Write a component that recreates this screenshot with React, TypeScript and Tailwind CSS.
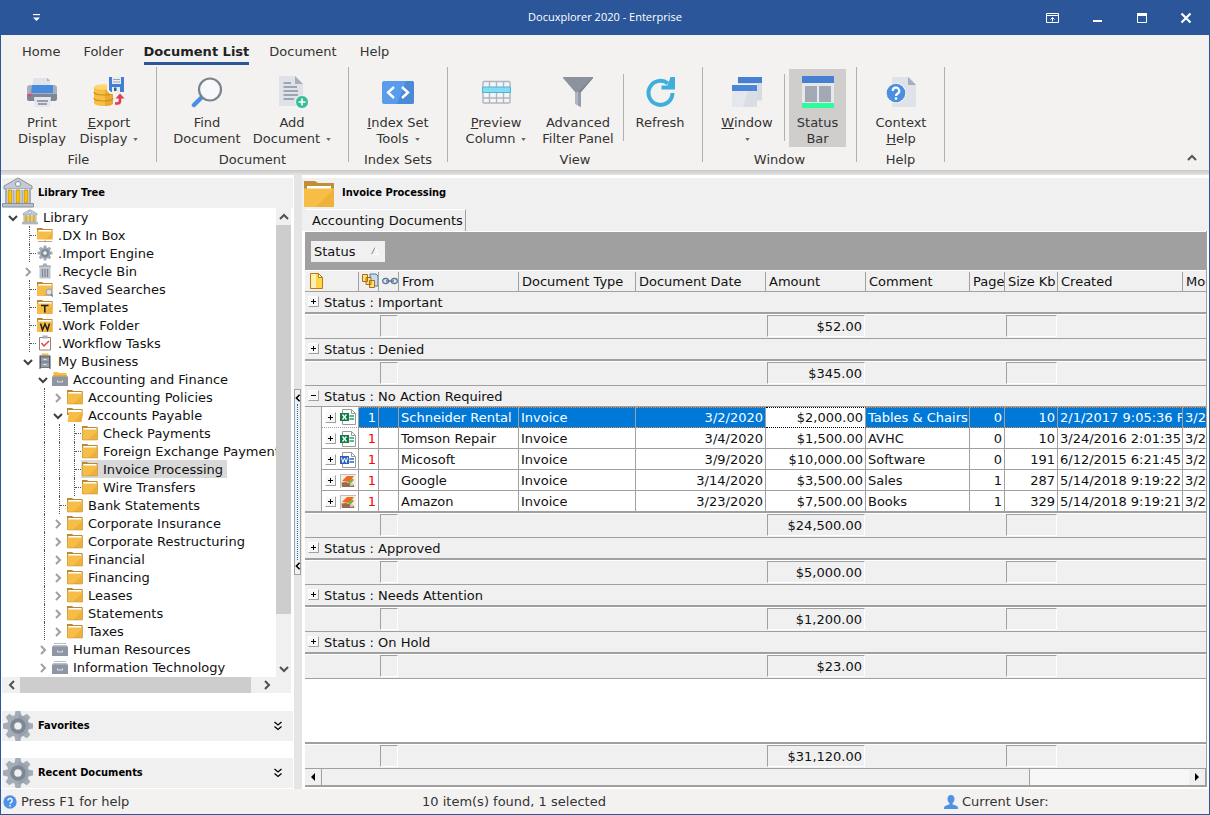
import { Fragment, type ReactNode } from 'react';
import clsx from 'clsx';

/* ---------- small icons ---------- */

function LibraryIcon({ className }: { className: string }) {
  return (
    <svg viewBox="0 0 32 32" className={className} aria-hidden="true">
      <path d="M16 1 30 9v3H2V9z" fill="#c3cad6" stroke="#8b93a1" />
      <circle cx="16" cy="7" r="2.6" fill="#f4f6fa" stroke="#8b93a1" />
      <path d="M4 12h24v14H4z" fill="#e9ebf0" />
      <path d="M6 13h4v13H6zM14 13h4v13h-4zM22 13h4v13h-4z" fill="#fdbf00" stroke="#8a7a4a" strokeWidth=".6" />
      <path d="M3 12h2v14H3zM11 13h1.600v13H11zM19.400 13H21v13h-1.600zM27 12h2v14h-2z" fill="#a5adba" />
      <path d="M.5 26.500h31v3.500H.5z" fill="#b9c0cd" stroke="#8b93a1" />
    </svg>
  );
}

function FolderIcon({ className, open = false, mark }: { className: string; open?: boolean; mark?: string }) {
  return (
    <svg viewBox="0 0 16 16" className={className} aria-hidden="true">
      <path d="M0 1h5l1.500 1H15.500v6H0z" fill="#b98a35" />
      <path d="M1.200 3h13.400v3H1.200z" fill="#fff" />
      <path d={open ? 'M.5 15 2 5h14l-1.500 10z' : 'M0 4.500h15.500V15H0z'} fill="#f6bd47" />
      <path d={open ? 'M7 15 16 5l-1.500 10z' : 'M6 15 15.500 6v9z'} fill="#edb03b" />
      {!mark && !open && <path d="M.5 4v11h15V3" fill="none" stroke="#c08f3a" strokeOpacity=".5" />}
      {mark === 'share' && (
        <>
          <path d="M0 12.500h16V16H0z" fill="#fff" />
          <path d="M1 14.500h14M8 12.500v3" stroke="#b8a888" />
        </>
      )}
      {mark === 'search' && (
        <>
          <circle cx="12" cy="11" r="3" fill="#d9e2ee" stroke="#8fa0b5" />
          <path d="m14 13.500 2 2" stroke="#3b82d6" strokeWidth="1.500" />
        </>
      )}
      {mark === 'T' && <path d="M4 6.500h7.500M7.800 6.500v7" stroke="#222" strokeWidth="1.600" />}
      {mark === 'W' && <path d="m3.500 6.500 2 6.500 2.500-6 2.500 6 2-6.500" fill="none" stroke="#222" strokeWidth="1.500" />}
    </svg>
  );
}

const teeth = [0, 45, 90, 135, 180, 225, 270, 315];

function GearIcon({ className }: { className: string }) {
  return (
    <svg viewBox="0 0 32 32" className={className} aria-hidden="true">
      {teeth.map((a) => (
        <path key={a} d="M13.500 1h5l1.500 7h-8z" fill="#a4acb8" transform={`rotate(${a} 16 16)`} />
      ))}
      <circle cx="16" cy="16" r="11" fill="#a4acb8" />
      <path d="M16 5a11 11 0 0 1 0 22z" fill="#99a1ae" />
      <circle cx="16" cy="16" r="6" fill="none" stroke="#7e8794" strokeWidth="3.500" />
      <circle cx="16" cy="16" r="3.600" fill="#eef0f3" />
    </svg>
  );
}

function TrashIcon() {
  return (
    <svg viewBox="0 0 16 16" className="size-4" aria-hidden="true">
      <path d="M2 2.700 6 2V.5h4V2l4 .7v1.800H2z" fill="#a8afba" />
      <path d="M2.500 4.500h11V15.500h-11z" fill="#bcc2cc" />
      <path d="M5.500 6v8M8 6v8M10.500 6v8" stroke="#7f8794" strokeWidth="1.200" />
    </svg>
  );
}

function TaskIcon() {
  return (
    <svg viewBox="0 0 16 16" className="size-4" aria-hidden="true">
      <path d="M2.500 2.500h11v12.500h-11z" fill="#fff" stroke="#9c7b70" />
      <path d="M5.500.5h5v3h-5z" fill="#a9b0bb" />
      <path d="m4.500 8 2.500 3 5-5" fill="none" stroke="#e0404f" strokeWidth="1.500" />
    </svg>
  );
}

function CabinetIcon() {
  return (
    <svg viewBox="0 0 16 16" className="size-4" aria-hidden="true">
      <path d="M4.500.5h7V4h-7z" fill="#edc05a" />
      <path d="M3 2.500h10V15H3z" fill="#6e7682" />
      <path d="M4 4.500h8v4H4zM4 9.500h8v4.500H4z" fill="#979fab" />
      <path d="M6.500 6.500h3M6.500 11.500h3" stroke="#e5e8ec" />
      <path d="M3 2.500V16M13 2.500V16" stroke="#444b55" />
    </svg>
  );
}

function DrawerIcon({ open = false }: { open?: boolean }) {
  return (
    <svg viewBox="0 0 16 16" className="size-4" aria-hidden="true">
      {open && <path d="M1.500 1H6l1 1h7.500v4h-13z" fill="#f3bc4d" />}
      {!open && <path d="M2 2.500h12" stroke="#b8bdc6" />}
      <path d="M1 4h14v2H1z" fill={open ? '#e3a93a' : '#b8bdc6'} />
      <path d="M0 5.500h16V15H0z" fill="#8e96a4" />
      <path d="M5.500 9.500v1.500h5V9.500" fill="none" stroke="#e9ecf0" strokeWidth=".9" />
    </svg>
  );
}

function Chevron({ dir, className = 'size-[10px]' }: { dir: 'up' | 'down' | 'left' | 'right'; className?: string }) {
  const d = {
    up: 'M1 7 5 3l4 4',
    down: 'M1 3l4 4 4-4',
    left: 'M7 1 3 5l4 4',
    right: 'M3 1l4 4-4 4',
  }[dir];
  return (
    <svg viewBox="0 0 10 10" className={className} fill="none" stroke="currentColor" strokeWidth="2" aria-hidden="true">
      <path d={d} />
    </svg>
  );
}

function HelpBubble({ className }: { className: string }) {
  return (
    <svg viewBox="0 0 20 20" className={className} aria-hidden="true">
      <circle cx="10" cy="10" r="9.500" fill="#4f93e6" />
      <path d="M7 8a3 3 0 1 1 4.600 2.500C10.400 11.200 10 11.600 10 12.600" fill="none" stroke="#fff" strokeWidth="2" />
      <circle cx="10" cy="15.200" r="1.200" fill="#fff" />
    </svg>
  );
}

function FileIcon({ kind }: { kind: string }) {
  if (kind === 'image') {
    return (
      <svg viewBox="0 0 16 16" className="size-4" aria-hidden="true">
        <path d="M.5 15V1.500H16" fill="none" stroke="#bdbdbd" />
        <path d="M1 2h15v12H1z" fill="#f6efe6" />
        <path d="M2 8 7 3h7L9 9z" fill="#f26522" />
        <path d="m8 9 4-4 2 2-4 4z" fill="#79b23c" />
        <path d="M1.500 9.500 6 9l8 3v2H2z" fill="#9a6a4f" />
        <path d="M10 10.500h3V13h-3z" fill="#d8b9c4" />
      </svg>
    );
  }
  const excel = kind === 'excel';
  return (
    <svg viewBox="0 0 16 16" className="size-4" aria-hidden="true">
      <path d="M2.500.5h9l4 4v11h-13z" fill="#fff" stroke="#9a9a9a" />
      <path d="M11.500.5v4h4" fill="none" stroke="#9a9a9a" />
      <path d="M0 4h9v8H0z" fill={excel ? '#107c41' : '#2b5fc0'} />
      {excel ? (
        <path d="m2.500 5.500 4 5m0-5-4 5" stroke="#fff" strokeWidth="1.300" />
      ) : (
        <path d="m1.500 5.500 1.300 5 1.700-4.500 1.700 4.500 1.300-5" fill="none" stroke="#fff" />
      )}
      <path d="M9.500 7h4.500M9.500 10h4.500" stroke={excel ? '#21a366' : '#2b5fc0'} strokeWidth="1.500" />
    </svg>
  );
}

/* ---------- ribbon icons (32px) ---------- */

function Icon32({ children }: { children: ReactNode }) {
  return (
    <svg viewBox="0 0 32 32" className="size-8" aria-hidden="true">
      {children}
    </svg>
  );
}

const icons = {
  print: (
    <Icon32>
      <path d="M8 2h14l2 2v6H7V3z" fill="#e0e4ea" />
      <path d="M21 2v3h3z" fill="#aab0bb" />
      <path d="M1 12q0-3 3-3h24q3 0 3 3v6H1z" fill="#aab0bb" />
      <path d="M1 18h30v5q0 2-2 2H3q-2 0-2-2z" fill="#7f8795" />
      <path d="M6 9h21v8H5z" fill="#4a8be0" />
      <circle cx="4" cy="19" r="1.600" fill="#e8465a" />
      <path d="M8 21h17l-1 10H9z" fill="#e3e6ec" />
      <path d="M11 25h11M12 28h9" stroke="#7f8795" strokeWidth="1.300" />
    </Icon32>
  ),
  exportDb: (
    <Icon32>
      <path d="M1 11v16c0 4 19 4 19 0V11z" fill="#f7bf45" />
      <path d="M12 13v17c5 0 8-1 8-3V11z" fill="#eaa92f" />
      <ellipse cx="10.500" cy="11" rx="9.500" ry="2.800" fill="#ffd670" />
      <path d="M1 16c0 4 19 4 19 0M1 22c0 4 19 4 19 0" fill="none" stroke="#c98f1f" strokeWidth="1.200" />
      <path d="M14 0h17v18H17l-3-3z" fill="#f3f2f1" />
      <path d="M16 1h15v15H18l-2-2z" fill="#3f80d4" />
      <path d="M19 1h9v7h-9zM19 11h8v5h-8z" fill="#e7ebf2" />
      <path d="M20 3.500h7M20 6h7" stroke="#9aa5b5" />
      <path d="M21 11.500h2.500V15H21z" fill="#3a5b8c" />
      <path d="M22 27.500h2.500q2.500 0 2.500-3V22" fill="none" stroke="#e33c50" strokeWidth="2.600" />
      <path d="m27 17.500 4.500 5h-9z" fill="#e33c50" />
    </Icon32>
  ),
  find: (
    <Icon32>
      <path d="m3 29 7-7" stroke="#4a8fe2" strokeWidth="4.500" strokeLinecap="round" />
      <circle cx="19" cy="13.500" r="11" fill="#f6f8fb" stroke="#7b838f" strokeWidth="2.200" />
    </Icon32>
  ),
  addDoc: (
    <Icon32>
      <path d="M3 0h16l8 8v22H3z" fill="#dfe2e8" />
      <path d="M19 0v8h8z" fill="#a8aeb9" />
      <path d="M7.500 7H15M7.500 11H21M7.500 15H22M7.500 19H22M7.500 23H18" stroke="#8a919d" strokeWidth="1.600" />
      <circle cx="26" cy="26" r="6.500" fill="#36bf96" stroke="#f3f2f1" />
      <path d="M26 22.500v7M22.500 26h7" stroke="#fff" strokeWidth="1.600" />
    </Icon32>
  ),
  indexSet: (
    <Icon32>
      <rect y="5" width="32" height="23" rx="2" fill="#5a9cec" />
      <path d="M24 5h6q2 0 2 2v19q0 2-2 2H15z" fill="#4c8ad8" />
      <path d="m12 11-6 5.500 6 5.500M20 11l6 5.500-6 5.500" fill="none" stroke="#fff" strokeWidth="2.400" />
    </Icon32>
  ),
  preview: (
    <Icon32>
      <rect x="3" y="5.500" width="27" height="21.500" rx="1" fill="#f4f5f7" stroke="#b0b5be" strokeWidth="1.400" />
      <path d="M9.500 5v22M16.500 5v22M23.500 5v22M3 22h27" stroke="#b0b5be" strokeWidth="1.400" />
      <path d="M2.500 11h28v5.500h-28z" fill="#86dcf3" stroke="#4cb5d6" />
    </Icon32>
  ),
  filter: (
    <Icon32>
      <path d="M1 1h30v1L19 16h-6L1 2z" fill="#8d939e" />
      <path d="M31 1 16 16h3L31 2z" fill="#7f858f" />
      <path d="M13 16h6v15l-6-3z" fill="#aeb6c2" />
      <path d="M16 16h3v15l-3-1.500z" fill="#949ca9" />
    </Icon32>
  ),
  refresh: (
    <Icon32>
      <path d="M28.500 17a12 12 0 1 1-4.500-9.500" fill="none" stroke="#3eaedc" strokeWidth="4" />
      <path d="M26.500 1h4.500v12.500H17.500v-4h6z" fill="#3eaedc" />
    </Icon32>
  ),
  windows: (
    <Icon32>
      <path d="M7 1.500h24v23H7z" fill="#d6dae1" />
      <path d="M7 1h24v6H7z" fill="#4580d2" />
      <path d="M0 8h26v24H0z" fill="#f3f2f1" />
      <path d="M1 9h25v22H1z" fill="#e4e7ed" />
      <path d="M19 9h7v22H12z" fill="#d9dde4" />
      <path d="M1 9h25v6H1z" fill="#4a86d8" />
    </Icon32>
  ),
  statusBar: (
    <Icon32>
      <path d="M0 0h32v27H0z" fill="#e6e8ec" />
      <path d="M0 0h32v7H0z" fill="#4580d2" />
      <path d="M3 10h12v16H3zM17 10h12v16H17z" fill="#a3a9b4" />
      <path d="M0 27h32v5H0z" fill="#2bfd9c" />
    </Icon32>
  ),
  contextHelp: (
    <Icon32>
      <path d="M7 1h17l7 7v23H7z" fill="#dfe2e8" />
      <path d="M23 1v8h8z" fill="#a8aeb9" />
      <circle cx="11" cy="17" r="10.300" fill="#f3f2f1" />
      <circle cx="11" cy="17" r="9.300" fill="#4b8fe2" />
      <path d="M7.800 15a3.200 3.200 0 1 1 4.900 2.500C11.400 18.300 11 18.700 11 20" fill="none" stroke="#fff" strokeWidth="2.200" />
      <circle cx="11" cy="22.600" r="1.300" fill="#fff" />
    </Icon32>
  ),
};

/* ---------- ribbon ---------- */

type RibbonButtonProps = {
  icon: ReactNode;
  line1: ReactNode;
  line2?: ReactNode;
  menu?: boolean;
  className: string;
};

function RibbonButton({ icon, line1, line2, menu, className }: RibbonButtonProps) {
  return (
    <button className={clsx('mt-[2px] flex h-[78px] shrink-0 flex-col items-center pt-[7px] leading-4', className)}>
      {icon}
      <span className="mt-[7px] whitespace-nowrap">{line1}</span>
      <span className="flex h-4 items-center whitespace-nowrap">
        {line2}
        {menu && (
          <svg viewBox="0 0 6 4" className={clsx('h-[3px] w-[5px]', line2 && 'ml-[6px]')} aria-hidden="true">
            <path d="M0 0h6L3 4z" fill="#666" />
          </svg>
        )}
      </span>
    </button>
  );
}

function RibbonGroup({ label, className, children }: { label: string; className: string; children: ReactNode }) {
  return (
    <section className="flex shrink-0 items-start">
      <div className={className}>
        <div className="flex">{children}</div>
        <div className="mt-[5px] text-center leading-4">{label}</div>
      </div>
      <div className="h-[95px] w-px bg-[#b0b0b0]" />
    </section>
  );
}

function ShortRule() {
  return <div className="mt-[7px] h-[67px] w-px bg-[#b0b0b0]" />;
}

function Ribbon() {
  const tabs = ['Home', 'Folder', 'Document List', 'Document', 'Help'];
  return (
    <header className="bg-[#f3f2f1] text-[#333]">
      <nav className="flex h-8 items-start gap-[17px] pl-[18px] pt-[7px]">
        {tabs.map((tab) => (
          <button
            key={tab}
            className={clsx(
              'whitespace-nowrap border-b-[3px] leading-5',
              tab === 'Document List'
                ? 'border-[#2b579a] font-bold text-[#222]'
                : 'border-transparent px-[3px]'
            )}
          >
            {tab}
          </button>
        ))}
      </nav>
      <div className="flex h-[103px]">
        <RibbonGroup label="File" className="w-[155px]">
          <RibbonButton className="ml-[11px] w-[60px]" icon={icons.print} line1="Print" line2="Display" />
          <RibbonButton className="w-[74px]" icon={icons.exportDb} line1={<><u>E</u>xport</>} line2="Display" menu />
        </RibbonGroup>
        <RibbonGroup label="Document" className="w-[191px]">
          <RibbonButton className="ml-[13px] w-[74px]" icon={icons.find} line1="Find" line2="Document" />
          <RibbonButton className="w-[96px]" icon={icons.addDoc} line1="Add" line2="Document" menu />
        </RibbonGroup>
        <RibbonGroup label="Index Sets" className="w-[98px]">
          <RibbonButton className="ml-[9px] w-[80px]" icon={icons.indexSet} line1={<><u>I</u>ndex Set</>} line2="Tools" menu />
        </RibbonGroup>
        <RibbonGroup label="View" className="w-[254px]">
          <RibbonButton className="ml-[11px] w-[74px]" icon={icons.preview} line1={<><u>P</u>review</>} line2="Column" menu />
          <RibbonButton className="w-[90px]" icon={icons.filter} line1="Advanced" line2="Filter Panel" />
          <ShortRule />
          <RibbonButton className="w-[72px]" icon={icons.refresh} line1="Refresh" />
        </RibbonGroup>
        <RibbonGroup label="Window" className="w-[153px]">
          <RibbonButton className="ml-[7px] w-[74px]" icon={icons.windows} line1={<><u>W</u>indow</>} menu />
          <ShortRule />
          <RibbonButton className="ml-1 w-[57px] bg-[#cfcecd]" icon={icons.statusBar} line1="Status" line2="Bar" />
        </RibbonGroup>
        <RibbonGroup label="Help" className="w-[87px]">
          <RibbonButton className="ml-3 w-[64px]" icon={icons.contextHelp} line1="Context" line2={<span><u>H</u>elp</span>} />
        </RibbonGroup>
        <button aria-label="Collapse ribbon" className="mb-[7px] ml-auto mr-3 self-end text-[#555]">
          <Chevron dir="up" />
        </button>
      </div>
    </header>
  );
}

function TitleBar() {
  return (
    <div className="grid h-[35px] shrink-0 grid-cols-[1fr_auto_1fr] items-center bg-[#2b579a] text-white">
      <button aria-label="Customize quick access toolbar" className="ml-8 w-[8px]">
        <svg viewBox="0 0 6 6" className="size-[7px]" aria-hidden="true">
          <path d="M0 .5h6" stroke="#fff" />
          <path d="M0 3h6L3 6z" fill="#fff" />
        </svg>
      </button>
      <h1 className="font-['Open_Sans','Noto_Sans',sans-serif] text-[11px]">Docuxplorer 2020 - Enterprise</h1>
      <div className="flex items-center justify-end gap-8 pr-[17px]">
        <button aria-label="Ribbon display options">
          <svg viewBox="0 0 14 12" className="h-3 w-[14px]" fill="none" stroke="#fff" aria-hidden="true">
            <path d="M.5 1.500h12v9H.5zM.5 3.500h12M6.500 9.500v-4M4.500 7.500l2-2 2 2" />
          </svg>
        </button>
        <button aria-label="Minimize">
          <svg viewBox="0 0 12 12" className="size-3" aria-hidden="true">
            <path d="M1 8h9v2H1z" fill="#fff" />
          </svg>
        </button>
        <button aria-label="Maximize">
          <svg viewBox="0 0 12 12" className="size-3" aria-hidden="true">
            <path d="M1 1h10v3H1z" fill="#fff" />
            <path d="M1.500 1.500h9v9h-9z" fill="none" stroke="#fff" />
          </svg>
        </button>
        <button aria-label="Close">
          <svg viewBox="0 0 12 12" className="size-3" stroke="#fff" strokeWidth="2.200" aria-hidden="true">
            <path d="m1.500 1.500 9 9m0-9-9 9" />
          </svg>
        </button>
      </div>
    </div>
  );
}

/* ---------- library tree ---------- */

type Node = {
  label: string;
  depth: number;
  icon: ReactNode;
  state?: 'open' | 'closed';
  selected?: boolean;
};

const folder = <FolderIcon className="size-4" />;

const nodes: Node[] = [
  { label: 'Library', depth: 0, icon: <LibraryIcon className="size-4" />, state: 'open' },
  { label: '.DX In Box', depth: 1, icon: <FolderIcon className="size-4" mark="share" /> },
  { label: '.Import Engine', depth: 1, icon: <GearIcon className="size-4" /> },
  { label: '.Recycle Bin', depth: 1, icon: <TrashIcon />, state: 'closed' },
  { label: '.Saved Searches', depth: 1, icon: <FolderIcon className="size-4" mark="search" /> },
  { label: '.Templates', depth: 1, icon: <FolderIcon className="size-4" mark="T" /> },
  { label: '.Work Folder', depth: 1, icon: <FolderIcon className="size-4" mark="W" /> },
  { label: '.Workflow Tasks', depth: 1, icon: <TaskIcon /> },
  { label: 'My Business', depth: 1, icon: <CabinetIcon />, state: 'open' },
  { label: 'Accounting and Finance', depth: 2, icon: <DrawerIcon open />, state: 'open' },
  { label: 'Accounting Policies', depth: 3, icon: folder, state: 'closed' },
  { label: 'Accounts Payable', depth: 3, icon: <FolderIcon className="size-4" open />, state: 'open' },
  { label: 'Check Payments', depth: 4, icon: folder },
  { label: 'Foreign Exchange Payments', depth: 4, icon: folder },
  { label: 'Invoice Processing', depth: 4, icon: folder, selected: true },
  { label: 'Wire Transfers', depth: 4, icon: folder },
  { label: 'Bank Statements', depth: 3, icon: folder },
  { label: 'Corporate Insurance', depth: 3, icon: folder, state: 'closed' },
  { label: 'Corporate Restructuring', depth: 3, icon: folder, state: 'closed' },
  { label: 'Financial', depth: 3, icon: folder, state: 'closed' },
  { label: 'Financing', depth: 3, icon: folder, state: 'closed' },
  { label: 'Leases', depth: 3, icon: folder, state: 'closed' },
  { label: 'Statements', depth: 3, icon: folder, state: 'closed' },
  { label: 'Taxes', depth: 3, icon: folder, state: 'closed' },
  { label: 'Human Resources', depth: 2, icon: <DrawerIcon />, state: 'closed' },
  { label: 'Information Technology', depth: 2, icon: <DrawerIcon />, state: 'closed' },
];

function TreeRow({ node }: { node: Node }) {
  return (
    <li className="flex h-[18px] pl-[3px]">
      {Array.from({ length: node.depth }, (_, d) => (
        <span key={d} className="w-[15px] shrink-0 pl-[9px]">
          {d >= 2 && <span className="block h-full border-l border-dotted border-[#555]" />}
        </span>
      ))}
      {node.state ? (
        <button
          aria-label={node.state === 'open' ? 'Collapse' : 'Expand'}
          className={clsx(
            'flex w-4 shrink-0 items-center justify-center pt-px',
            node.state === 'open' ? 'text-[#404040]' : 'text-[#a0a0a0]'
          )}
        >
          <Chevron dir={node.state === 'open' ? 'down' : 'right'} />
        </button>
      ) : (
        <span className="flex w-4 shrink-0 items-center pl-[9px]">
          <span className="h-full border-l border-dotted border-[#555]" />
          <span className="w-full border-t border-dotted border-[#555]" />
        </span>
      )}
      <button
        className={clsx(
          'flex items-center gap-1 whitespace-nowrap pl-px pr-1',
          node.selected && 'bg-[#d9d9d9]'
        )}
      >
        {node.icon}
        <span className="pl-px pt-[2px] leading-4">{node.label}</span>
      </button>
    </li>
  );
}

const paneHeading = "font-['DejaVu_Sans_Condensed','DejaVu_Sans',sans-serif] text-[11px] font-bold text-black";

function PaneTitle({ icon, children, collapsed }: { icon: ReactNode; children: ReactNode; collapsed?: boolean }) {
  return (
    <div className="flex h-[30px] shrink-0 items-center bg-[#f0f0f0] pr-[10px]">
      {icon}
      <h2 className={clsx(paneHeading, 'ml-1 grow')}>{children}</h2>
      {collapsed && (
        <button aria-label="Expand pane">
          <svg viewBox="0 0 10 10" className="size-[10px]" fill="none" stroke="#000" strokeWidth="1.300" aria-hidden="true">
            <path d="m1.500 1 3.500 3L8.500 1M1.500 5.500l3.500 3 3.500-3" />
          </svg>
        </button>
      )}
    </div>
  );
}

function Sidebar() {
  return (
    <aside className="flex w-[293px] shrink-0 flex-col border-r border-white bg-white pl-px pt-[3px]">
      <PaneTitle icon={<LibraryIcon className="size-8" />}>Library Tree</PaneTitle>
      <div className="mr-[2px] flex min-h-0 grow">
        <ul className="min-w-0 grow overflow-hidden">
          {nodes.map((node) => (
            <TreeRow key={node.label} node={node} />
          ))}
        </ul>
        <div className="flex w-[15px] shrink-0 flex-col bg-[#f0f0f0] text-[#505050]">
          <button aria-label="Scroll up" className="flex h-[17px] shrink-0 items-center justify-center">
            <Chevron dir="up" />
          </button>
          <div className="min-h-0 grow basis-[388px] bg-[#cdcdcd]" />
          <div className="min-h-0 grow basis-[46px]" />
          <button aria-label="Scroll down" className="flex h-[17px] shrink-0 items-center justify-center">
            <Chevron dir="down" />
          </button>
        </div>
      </div>
      <div className="mr-[2px] flex h-4 shrink-0 bg-[#f0f0f0] pl-px pr-[16px] text-[#505050]">
        <button aria-label="Scroll left" className="flex w-[17px] items-center justify-center">
          <Chevron dir="left" />
        </button>
        <div className="grow bg-[#cdcdcd]" />
        <button aria-label="Scroll right" className="ml-[7px] flex w-[17px] items-center justify-center">
          <Chevron dir="right" />
        </button>
      </div>
      <div className="mt-[18px]">
        <PaneTitle collapsed icon={<GearIcon className="size-8" />}>Favorites</PaneTitle>
      </div>
      <div className="mb-px mt-[17px]">
        <PaneTitle collapsed icon={<GearIcon className="size-8" />}>Recent Documents</PaneTitle>
      </div>
    </aside>
  );
}

function Splitter() {
  return (
    <div className="flex w-2 shrink-0 items-center bg-[#e5e5e5]">
      <button
        aria-label="Collapse sidebar"
        className="flex h-[186px] w-[7px] flex-col items-center border border-[#a0a0a0] bg-[#f0f0f0] py-1 text-black"
      >
        <Chevron dir="left" className="size-2" />
        <span className="my-[2px] grow border-l border-dotted border-[#0078d7]" />
        <Chevron dir="left" className="size-2" />
      </button>
    </div>
  );
}

/* ---------- document grid ---------- */

type Doc = {
  kind: string;
  from: string;
  date: string;
  amount: string;
  comment: string;
  pages: number;
  size: number;
  created: string;
};

const docs: Doc[] = [
  { kind: 'excel', from: 'Schneider Rental', date: '3/2/2020', amount: '$2,000.00', comment: 'Tables & Chairs', pages: 0, size: 10, created: '2/1/2017 9:05:36 PM' },
  { kind: 'excel', from: 'Tomson Repair', date: '3/4/2020', amount: '$1,500.00', comment: 'AVHC', pages: 0, size: 10, created: '3/24/2016 2:01:35' },
  { kind: 'word', from: 'Micosoft', date: '3/9/2020', amount: '$10,000.00', comment: 'Software', pages: 0, size: 191, created: '6/12/2015 6:21:45' },
  { kind: 'image', from: 'Google', date: '3/14/2020', amount: '$3,500.00', comment: 'Sales', pages: 1, size: 287, created: '5/14/2018 9:19:22' },
  { kind: 'image', from: 'Amazon', date: '3/23/2020', amount: '$7,500.00', comment: 'Books', pages: 1, size: 329, created: '5/14/2018 9:19:21' },
];

const groups: { status: string; total: string; rows?: Doc[] }[] = [
  { status: 'Important', total: '$52.00' },
  { status: 'Denied', total: '$345.00' },
  { status: 'No Action Required', total: '$24,500.00', rows: docs },
  { status: 'Approved', total: '$5,000.00' },
  { status: 'Needs Attention', total: '$1,200.00' },
  { status: 'On Hold', total: '$23.00' },
];

function Columns() {
  return (
    <colgroup>
      <col className="w-[17px]" />
      <col className="w-[37px]" />
      <col className="w-[20px]" />
      <col className="w-[20px]" />
      <col className="w-[120px]" />
      <col className="w-[117px]" />
      <col className="w-[130px]" />
      <col className="w-[100px]" />
      <col className="w-[104px]" />
      <col className="w-[35px]" />
      <col className="w-[53px]" />
      <col className="w-[125px]" />
      <col />
    </colgroup>
  );
}

function Th({ children, span, last = false }: { children: ReactNode; span?: number; last?: boolean }) {
  return (
    <th colSpan={span} className="h-[22px] border-b border-t border-b-[#a0a0a0] border-t-white bg-[#f0f0f0] p-0 text-left font-normal">
      <div
        className={clsx(
          'flex h-[19px] items-center overflow-hidden whitespace-nowrap pl-[3px] leading-[19px]',
          !last && 'border-r border-[#a0a0a0]'
        )}
      >
        {children}
      </div>
    </th>
  );
}

function Toggle({ open = false, className }: { open?: boolean; className?: string }) {
  return (
    <button
      aria-label={open ? 'Collapse' : 'Expand'}
      className={clsx(
        'size-[11px] shrink-0 border border-b-[#a0a0a0] border-l-white border-r-[#a0a0a0] border-t-white bg-[#f7f7f7]',
        className
      )}
    >
      <svg viewBox="0 0 9 9" className="block size-[9px]" stroke="#000" aria-hidden="true">
        <path d={open ? 'M2 4.500h5' : 'M2 4.500h5M4.500 2v5'} />
      </svg>
    </button>
  );
}

const sumBox = 'mx-px h-[22px] border border-b-white border-l-[#a0a0a0] border-r-white border-t-[#a0a0a0]';

function SummaryRow({ total }: { total: string }) {
  const cell = 'h-[25px] border-b border-t border-b-[#a0a0a0] border-t-white bg-[#f0f0f0] p-0 align-top';
  return (
    <tr>
      <td colSpan={3} className={cell} />
      <td className={cell}>
        <div className={sumBox} />
      </td>
      <td colSpan={3} className={cell} />
      <td className={cell}>
        <div className={clsx(sumBox, 'pr-[2px] text-right leading-[21px]')}>{total}</div>
      </td>
      <td colSpan={2} className={cell} />
      <td className={cell}>
        <div className={sumBox} />
      </td>
      <td colSpan={2} className={cell} />
    </tr>
  );
}

function DocRow({ doc, selected, last }: { doc: Doc; selected: boolean; last: boolean }) {
  const base = clsx(
    'overflow-hidden whitespace-nowrap border-b border-r border-r-[#a0a0a0] px-[2px] pb-0',
    last ? 'h-[22px] border-b-2' : 'h-[21px]',
    selected
      ? 'border-t pt-0 leading-[19px] [border-bottom-style:dotted] [border-top-style:dotted]'
      : 'border-b-[#a0a0a0] pt-[2px] leading-[18px]'
  );
  const cell = clsx(base, selected ? 'border-b-[#ff8a2b] border-t-[#ff8a2b] bg-[#0078d7] text-white' : 'bg-white');
  return (
    <tr>
      <td className={clsx('border-r border-[#a0a0a0] bg-[#f0f0f0] p-0', last && 'border-b-2')} />
      <td className={clsx(base, 'bg-white', selected && 'border-b-[#a0a0a0] border-t-white')}>
        <div className="-mt-px flex items-center gap-1 pl-px">
          <Toggle />
          <FileIcon kind={doc.kind} />
        </div>
      </td>
      <td className={clsx(cell, 'text-right', !selected && 'text-[#f00]')}>1</td>
      <td className={cell} />
      <td className={cell}>{doc.from}</td>
      <td className={cell}>Invoice</td>
      <td className={clsx(cell, 'text-right')}>{doc.date}</td>
      <td className={clsx(base, 'bg-white text-right', selected && 'border-b-black border-t-black')}>{doc.amount}</td>
      <td className={cell}>{doc.comment}</td>
      <td className={clsx(cell, 'text-right')}>{doc.pages}</td>
      <td className={clsx(cell, 'text-right')}>{doc.size}</td>
      <td className={cell}>{doc.created}</td>
      <td className={clsx(cell, 'border-r-0')}>3/2/2020</td>
    </tr>
  );
}

const tableClass = 'w-full table-fixed border-separate border-spacing-0';

function DocumentGrid() {
  return (
    <div className="ml-[3px] mr-[2px] flex min-h-0 grow flex-col overflow-hidden border-b-2 border-r border-[#a0a0a0]">
      <div className="flex h-[39px] shrink-0 items-center border-t border-white bg-[#a0a0a0] pl-[6px]">
        <button className="flex h-[21px] w-[74px] items-center justify-between bg-[#f0f0f0] pl-[3px] pr-[6px]">
          <span className="pt-px">Status</span>
          <svg viewBox="0 0 8 8" className="size-2" fill="none" aria-hidden="true">
            <path d="M.5 7.500 4 .5" stroke="#888" />
            <path d="m4 .5 3.500 7h-7" stroke="#fff" />
          </svg>
        </button>
      </div>
      <table className={tableClass}>
        <Columns />
        <thead>
          <tr>
            <Th span={2}>
              <svg viewBox="0 0 16 16" className="size-4" role="img" aria-label="File type">
                <path d="M2.500.5h8l4 4v11h-12z" fill="#ffd54a" stroke="#b87a12" />
                <path d="M3 1h5v14H3z" fill="#fff0b0" />
                <path d="M10.500.5v4h4z" fill="#fff" stroke="#b87a12" />
              </svg>
            </Th>
            <Th>
              <svg viewBox="0 0 16 16" className="size-4 shrink-0" role="img" aria-label="Versions">
                <path d="M8 1h6l2 2v10H8z" fill="#c9d9ee" stroke="#56749c" />
                <path d="M.5 1.500h5v7h-5zM4 4.500h5v7H4zM7.500 7.500h5v7h-5z" fill="#ffdf80" stroke="#a86f10" />
              </svg>
            </Th>
            <Th>
              <svg viewBox="0 0 16 16" className="size-4 shrink-0" role="img" aria-label="Links">
                <rect x=".7" y="5.500" width="6" height="5" rx="2.400" fill="#dfe7f2" stroke="#5f7699" strokeWidth="1.300" />
                <rect x="9.300" y="5.500" width="6" height="5" rx="2.400" fill="#dfe7f2" stroke="#5f7699" strokeWidth="1.300" />
                <path d="M4 8h8" stroke="#5f7699" strokeWidth="1.500" />
              </svg>
            </Th>
            <Th>From</Th>
            <Th>Document Type</Th>
            <Th>Document Date</Th>
            <Th>Amount</Th>
            <Th>Comment</Th>
            <Th>Pages</Th>
            <Th>Size Kb</Th>
            <Th>Created</Th>
            <Th last>Modified</Th>
          </tr>
        </thead>
        <tbody>
          {groups.map((group) => (
            <Fragment key={group.status}>
              <tr>
                <td
                  colSpan={13}
                  className={clsx(
                    'border-[#a0a0a0] bg-[#f0f0f0] py-0 pl-[3px] pr-0 align-top',
                    group.rows ? 'h-[21px] border-b' : 'h-[22px] border-b-2'
                  )}
                >
                  <div className="flex items-start gap-[5px]">
                    <Toggle open={!!group.rows} className="mt-1" />
                    <span className="pt-[2px] leading-[18px]">Status : {group.status}</span>
                  </div>
                </td>
              </tr>
              {group.rows?.map((doc, i) => (
                <DocRow key={doc.from} doc={doc} selected={i === 0} last={i === docs.length - 1} />
              ))}
              <SummaryRow total={group.total} />
            </Fragment>
          ))}
        </tbody>
      </table>
      <div className="grow bg-white" />
      <table className={clsx(tableClass, 'border-t-2 border-[#a0a0a0]')}>
        <Columns />
        <tbody>
          <SummaryRow total="$31,120.00" />
        </tbody>
      </table>
      <div className="flex h-4 shrink-0 bg-[#f7f7f7]">
        <button aria-label="Scroll left" className="flex w-[17px] items-center justify-center border-r border-[#a0a0a0] bg-[#f0f0f0]">
          <svg viewBox="0 0 4 8" className="h-2 w-1" aria-hidden="true">
            <path d="M4 0v8L0 4z" />
          </svg>
        </button>
        <div className="grow basis-[708px] border-r border-[#a0a0a0] bg-[#f0f0f0]" />
        <div className="grow basis-[159px]" />
        <button aria-label="Scroll right" className="flex w-[17px] items-center justify-center border-r border-[#a0a0a0] bg-[#f0f0f0]">
          <svg viewBox="0 0 4 8" className="h-2 w-1" aria-hidden="true">
            <path d="M0 0v8l4-4z" />
          </svg>
        </button>
      </div>
    </div>
  );
}

function DocumentPane() {
  return (
    <main className="flex min-w-0 grow flex-col bg-white pb-[2px] pt-[3px]">
      <div className="bg-[#f0f0f0]">
        <div className="flex h-[31px] items-center gap-2 pl-[2px]">
          <svg viewBox="0 0 30 28" className="h-7 w-[30px]" aria-hidden="true">
            <path d="M0 1h11l3 2h16v9H0z" fill="#c08f3a" />
            <path d="M3 6h24v4H3z" fill="#fff" />
            <path d="M0 8.500h30V27H0z" fill="#f6bd47" />
            <path d="M12 27 30 9v18z" fill="#efb13a" />
          </svg>
          <h2 className={paneHeading}>Invoice Processing</h2>
        </div>
        <button className="ml-1 block h-[22px] whitespace-nowrap border-r border-t border-r-[#a0a0a0] border-t-white pl-[6px] pr-[2px] leading-[20px]">
          Accounting Documents
        </button>
      </div>
      <DocumentGrid />
    </main>
  );
}

function StatusBar() {
  return (
    <footer className="grid h-[25px] shrink-0 grid-cols-[421px_1fr_265px] items-center bg-[#f3f2f1] text-[#333]">
      <span className="flex items-center gap-1 pl-[2px]">
        <HelpBubble className="size-[14px]" />
        Press F1 for help
      </span>
      <span>10 item(s) found, 1 selected</span>
      <span className="flex items-center gap-1">
        <svg viewBox="0 0 14 14" className="size-[14px]" aria-hidden="true">
          <path d="M7 0c2.500 0 3.500 2 3.500 4S9.500 7.500 8.500 8.300v.9L13 11q1 .6 1 3H0q0-2.400 1-3l4.500-1.800v-.9C4.500 7.500 3.500 6 3.500 4S4.500 0 7 0z" fill="#4f93e6" />
        </svg>
        Current User:
      </span>
    </footer>
  );
}

export default function App() {
  return (
    <div className="flex h-screen flex-col overflow-hidden border border-t-0 border-[#2b579a] bg-[#f3f2f1] font-['Verdana','DejaVu_Sans',sans-serif] text-[13px] text-[#111]">
      <TitleBar />
      <Ribbon />
      <div className="h-[5px] shrink-0 bg-linear-to-b from-[#c8c8c8] to-[#e5e5e5]" />
      <div className="flex min-h-0 grow">
        <Sidebar />
        <Splitter />
        <DocumentPane />
      </div>
      <StatusBar />
    </div>
  );
}
